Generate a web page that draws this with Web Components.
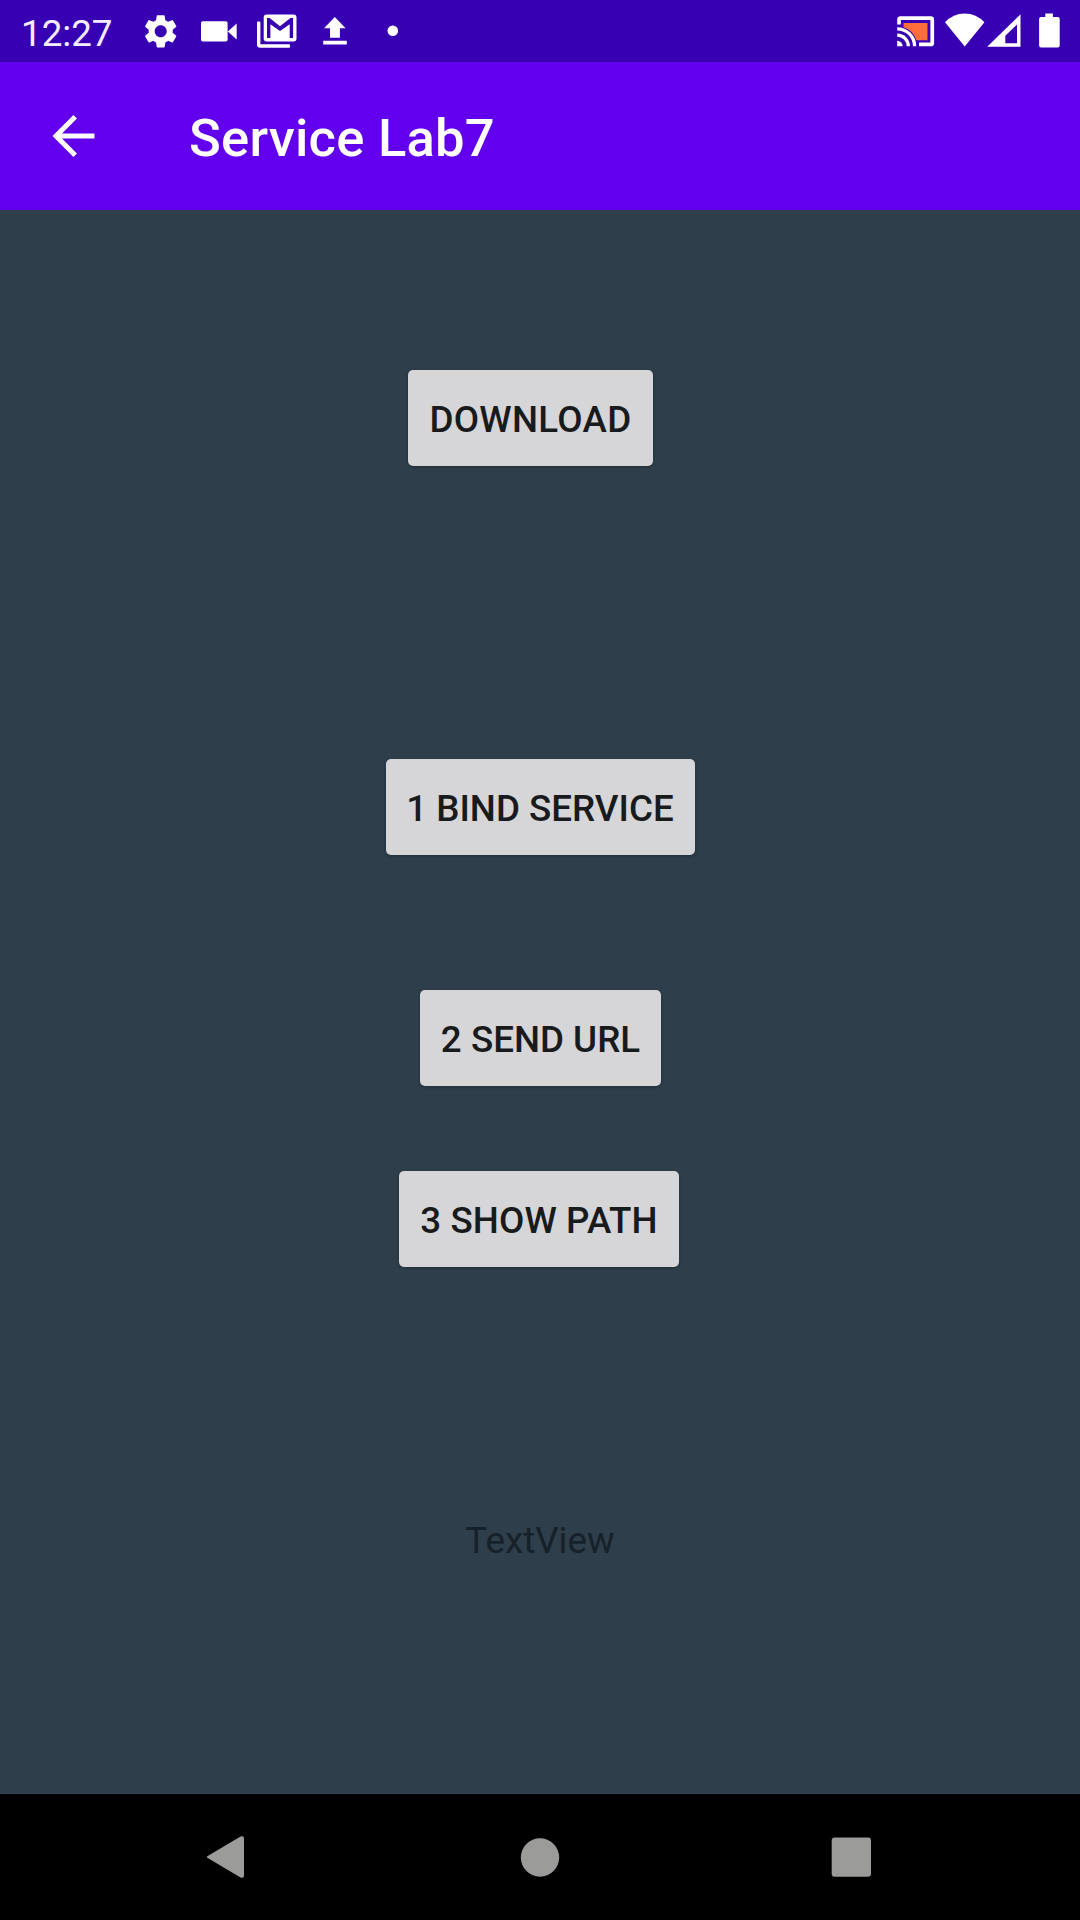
<!DOCTYPE html>
<html lang="en">
<head>
<meta charset="utf-8">
<title>Service Lab7</title>
<style>
html, body { margin: 0; height: 100%; background: #000; }
body { font-family: Roboto, "Liberation Sans", sans-serif; overflow: hidden; }
</style>
</head>
<body>
<phone-screen>
  <status-bar slot="status" time="12:27"></status-bar>
  <app-bar slot="bar">Service Lab7</app-bar>
  <raised-button style="width:245px;margin:160px 0 0 -19px;letter-spacing:.3px">DOWNLOAD</raised-button>
  <raised-button style="width:309px;margin-top:293px">1 BIND SERVICE</raised-button>
  <raised-button style="width:241px;margin:135px 0 0 1px">2 SEND URL</raised-button>
  <raised-button style="width:280px;margin:85px 0 0 -2px;letter-spacing:.1px">3 SHOW PATH</raised-button>
  <text-view>TextView</text-view>
  <nav-bar slot="nav"></nav-bar>
</phone-screen>
<script>
function define(name, html) {
  const t = document.createElement('template');
  t.innerHTML = html;
  customElements.define(name, class extends HTMLElement {
    constructor() {
      super();
      this.attachShadow({ mode: 'open' }).append(t.content.cloneNode(true));
    }
    connectedCallback() {
      const time = this.shadowRoot.querySelector('.time');
      if (time) time.textContent = this.getAttribute('time');
    }
  });
}

define('phone-screen', `
<style>
:host { display: flex; flex-direction: column; width: 1080px; height: 1920px; }
main { flex: 1; display: flex; flex-direction: column; align-items: center; background: #2e3e4a; }
</style>
<slot name="status"></slot><slot name="bar"></slot>
<main><slot></slot></main>
<slot name="nav"></slot>`);

define('status-bar', `
<style>
:host { display: flex; align-items: flex-start; height: 62px; background: #3700b3; color: #fff; box-sizing: border-box; padding-left: 21px; }
.time { width: 117px; font-size: 36.75px; line-height: 43px; padding-top: 12px; color: #f4ecff; }
svg { display: block; fill: #fff; height: 62px; }
.left { width: 270px; }
.right { width: 190px; margin-left: auto; }
</style>
<span class="time"></span>
<svg class="left" viewBox="138 0 270 62">
  <path transform="translate(140.6 11.2) scale(1.675)" d="M19.14 12.94c.04-.3.06-.61.06-.94 0-.32-.02-.64-.07-.94l2.03-1.58a.49.49 0 0 0 .12-.61l-1.92-3.32a.488.488 0 0 0-.59-.22l-2.39.96c-.5-.38-1.03-.7-1.62-.94l-.36-2.54a.484.484 0 0 0-.48-.41h-3.84c-.24 0-.43.17-.47.41l-.36 2.54c-.59.24-1.13.57-1.62.94l-2.39-.96c-.22-.08-.47 0-.59.22L2.74 8.87c-.12.21-.08.47.12.61l2.03 1.58c-.05.3-.09.63-.09.94s.02.64.07.94l-2.03 1.58a.49.49 0 0 0-.12.61l1.92 3.32c.12.22.37.29.59.22l2.39-.96c.5.38 1.03.7 1.62.94l.36 2.54c.05.24.24.41.48.41h3.84c.24 0 .44-.17.47-.41l.36-2.54c.59-.24 1.13-.56 1.62-.94l2.39.96c.22.08.47 0 .59-.22l1.92-3.32c.12-.22.07-.47-.12-.61l-2.01-1.58zM12 15.6c-1.98 0-3.6-1.62-3.6-3.6s1.62-3.6 3.6-3.6 3.6 1.62 3.6 3.6-1.62 3.6-3.6 3.6z"/>
  <rect x="201" y="21.3" width="26.6" height="20.2" rx="1.8"/>
  <path d="M227.8 31.4l8.9-8v16.2z"/>
  <path d="M257 22.3q0-.8.8-.8h1.8q.8 0 .8.8V44.3h28.8q.8 0 .8.8v1.8q0 .8-.8.8H260.200q-3.200 0-3.200-3.200z"/>
  <path fill-rule="evenodd" d="M266.700 14.500h26.800q3 0 3 3v21q0 3-3 3h-26.800q-3 0-3-3v-21q0-3 3-3zM267 18v20h3.400V24.200L280 31l9.700-6.800V38h3.400V18h-2.600L280 26.200 269.600 18z"/>
  <path d="M334.800 17l10.800 11.200h-5.700v9.500h-9.900v-9.500h-6zM323.200 40.800h23.600v3.700h-23.600z"/>
  <circle cx="392.800" cy="30.800" r="5.300"/>
</svg>
<svg class="right" viewBox="890 0 190 62">
  <path fill="#ff6d3a" d="M903.500 23h24v17.300h-11.200q-3-10-12.800-13z"/>
  <path d="M900.500 16.200h30.200q3.400 0 3.400 3.400v23.300q0 3.400-3.400 3.400H919v-3.700h11.400V19.900H900.900v4.600h-3.700v-4.900q0-3.400 3.300-3.400z"/>
  <g fill="none" stroke="#fff" stroke-width="3.300">
    <path d="M897.200 28.800A17.400 17.400 0 0 1 914.600 46.300M897.200 35.200A11 11 0 0 1 908.300 46.300"/>
  </g>
  <path d="M897.200 40.800a5.500 5.500 0 0 1 5.500 5.500h-5.500z"/>
  <path d="M945 22.300Q953 13.400 964.700 13.400T984.400 22.300L964.700 46.500z"/>
  <path fill-rule="evenodd" d="M1020.500 14.300V46.700H987.200zM1017 24.500L1005.300 35.800V43.200H1017z"/>
  <path d="M1045.300 13.500h7.600v3.400h4.800q2 0 2 2v26.700q0 2-2 2h-16.600q-2 0-2-2V18.900q0-2 2-2h4.200z"/>
</svg>`);

define('app-bar', `
<style>
:host { display: flex; align-items: center; height: 148px; background: #6200ee; color: #fff; font-size: 52.5px; font-weight: 500; line-height: 62px; }
svg { width: 44px; height: 44px; margin: 0 93px 0 52px; fill: none; stroke: #fff; stroke-width: 5; }
.title { padding-top: 4px; white-space: nowrap; letter-spacing: .25px; }
</style>
<svg viewBox="0 0 44 44"><path d="M42.500 22H4M23.200 2.800L4 22l19.200 19.200"/></svg>
<span class="title"><slot></slot></span>`);

define('raised-button', `
<style>
:host { display: flex; align-items: center; justify-content: center; height: 96px; box-sizing: border-box; border-radius: 5px; background: #d6d6d8; color: #191a1b; font-size: 36.75px; font-weight: 500; line-height: 43px; white-space: nowrap; box-shadow: 0 1px 3px rgba(0,0,0,.28); padding-top: 2px; }
</style>
<slot></slot>`);

define('text-view', `
<style>
:host { display: block; margin-top: 252px; color: #17212a; font-size: 36.75px; line-height: 43px; }
</style>
<slot></slot>`);

define('nav-bar', `
<style>
:host { display: flex; align-items: center; justify-content: space-between; height: 126px; background: #000; padding: 0 208px 0 206px; box-sizing: border-box; }
svg { width: 42px; height: 44px; fill: #9b9b99; }
</style>
<svg viewBox="0 0 42 44"><path d="M1.300 21.200L34.500 1.500Q38 .3 38 3.500V40.500Q38 43.800 34.500 42.500L1.300 22.800Q.2 22 1.300 21.200z"/></svg>
<svg viewBox="0 0 42 44"><circle cx="22" cy="22.500" r="19.200"/></svg>
<svg viewBox="0 0 42 44"><rect x="1.700" y="2.500" width="39.300" height="39.300" rx="3"/></svg>`);
</script>
</body>
</html>
